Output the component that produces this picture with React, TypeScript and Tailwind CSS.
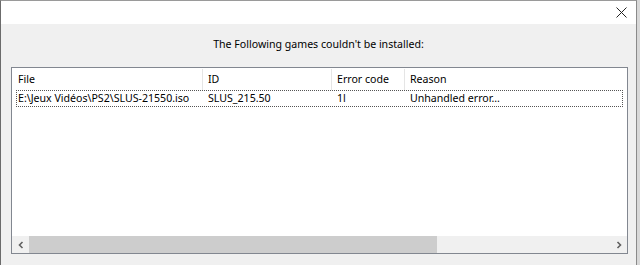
import React from "react";

const font = { fontFamily: '"Noto Sans", "Open Sans", sans-serif' };

export default function App() {
  return (
    <div className="w-[640px] h-[265px] bg-[#e9e9e9] flex overflow-hidden text-[10.6px] text-black whitespace-nowrap" style={font}>
      <div className="w-[637px] h-[265px] flex flex-col border-l border-t border-r border-l-[#6b6b6b] border-t-[#9a9a9a] border-r-[#8a8a8a] bg-[#f0f0f0]">
        <div className="h-[23px] bg-white flex items-center justify-end pr-[9px] shrink-0">
          <svg width="11" height="11" viewBox="0 0 11 11">
            <path d="M0.5 0.5 L10.5 10.5 M10.5 0.5 L0.5 10.5" stroke="#222" strokeWidth="1" />
          </svg>
        </div>
        <div className="flex-1 flex flex-col">
          <div className="h-[43px] flex items-center justify-center pb-[2px]">The Following games couldn't be installed:</div>
          <div className="ml-[10px] w-[617px] h-[187px] border border-[#828790] bg-white flex flex-col">
            <div className="h-[22px] flex items-center shrink-0 pt-[1px]">
              <div className="w-[191px] pl-[6px] h-full flex items-center border-r border-[#e5e5e5]">File</div>
              <div className="w-[129px] pl-[5px] h-full flex items-center border-r border-[#e5e5e5]">ID</div>
              <div className="w-[73px] pl-[5px] h-full flex items-center border-r border-[#e5e5e5]">Error code</div>
              <div className="flex-1 pl-[5px] h-full flex items-center">Reason</div>
            </div>
            <div className="mx-[4px] h-[17px] flex items-center border border-dotted border-[#555] shrink-0">
              <div className="w-[186px] pl-[1px] overflow-hidden">E:\Jeux Vidéos\PS2\SLUS-21550.iso</div>
              <div className="w-[129px] pl-[5px] overflow-hidden">SLUS_215.50</div>
              <div className="w-[73px] pl-[5px] overflow-hidden">1l</div>
              <div className="flex-1 pl-[5px] overflow-hidden">Unhandled error...</div>
            </div>
            <div className="flex-1" />
            <div className="h-[17px] bg-[#f0f0f0] flex items-center shrink-0">
              <div className="w-[17px] h-full flex items-center justify-center">
                <svg width="6" height="8" viewBox="0 0 6 8"><path d="M4.5 1 L1.5 4 L4.5 7" stroke="#606060" strokeWidth="1.6" fill="none" /></svg>
              </div>
              <div className="w-[408px] h-full bg-[#cdcdcd]" />
              <div className="flex-1" />
              <div className="w-[17px] h-full flex items-center justify-center">
                <svg width="6" height="8" viewBox="0 0 6 8"><path d="M1.5 1 L4.5 4 L1.5 7" stroke="#606060" strokeWidth="1.6" fill="none" /></svg>
              </div>
            </div>
          </div>
        </div>
      </div>
      <div className="flex-1 bg-[#d8d8d8]" />
    </div>
  );
}
